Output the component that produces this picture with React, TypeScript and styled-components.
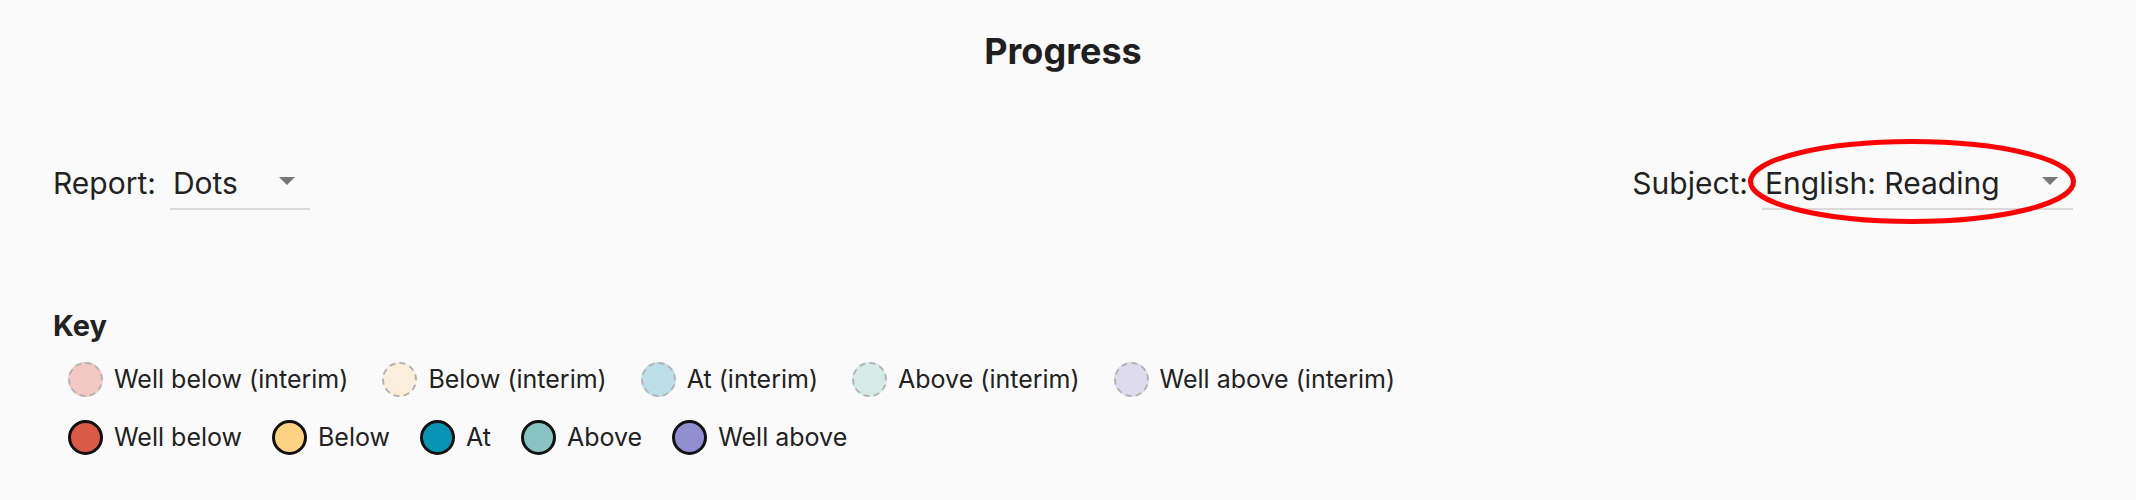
import React, { FC } from "react";
import styled, { createGlobalStyle } from "styled-components";

type Level = "wellBelow" | "below" | "at" | "above" | "wellAbove";

const colours: Record<Level, { solid: string; interim: string }> = {
  wellBelow: { solid: "#d95a45", interim: "#f2c8c4" },
  below: { solid: "#fed283", interim: "#faefdb" },
  at: { solid: "#0894b5", interim: "#bcdfe7" },
  above: { solid: "#86c3c1", interim: "#d6eae8" },
  wellAbove: { solid: "#918fcf", interim: "#dddbec" },
};

const interimKey: { level: Level; label: string }[] = [
  { level: "wellBelow", label: "Well below (interim)" },
  { level: "below", label: "Below (interim)" },
  { level: "at", label: "At (interim)" },
  { level: "above", label: "Above (interim)" },
  { level: "wellAbove", label: "Well above (interim)" },
];

const finalKey: { level: Level; label: string }[] = [
  { level: "wellBelow", label: "Well below" },
  { level: "below", label: "Below" },
  { level: "at", label: "At" },
  { level: "above", label: "Above" },
  { level: "wellAbove", label: "Well above" },
];

const App: FC = () => {
  return (
    <>
      <GlobalStyle />
      <Page>
        <Title>Progress</Title>
        <FilterBar>
          <Filter>
            <Label>Report:</Label>
            <Select $width={140}>
              <span>Dots</span>
              <Caret />
            </Select>
          </Filter>
          <Filter>
            <Label>Subject:</Label>
            <Select $width={311}>
              <span>English: Reading</span>
              <Caret />
              {/* hand-drawn highlight over the subject picker */}
              <Highlight width="340" height="98" viewBox="0 0 340 98">
                <ellipse
                  cx="170"
                  cy="46.5"
                  rx="161.5"
                  ry="40"
                  fill="none"
                  stroke="#ff0000"
                  strokeWidth="5"
                />
              </Highlight>
            </Select>
          </Filter>
        </FilterBar>
        <KeySection>
          <KeyTitle>Key</KeyTitle>
          <KeyRow $gap={34}>
            {interimKey.map((k) => (
              <KeyItem key={k.label}>
                <Dot $fill={colours[k.level].interim} $interim />
                <span>{k.label}</span>
              </KeyItem>
            ))}
          </KeyRow>
          <KeyRow $gap={30}>
            {finalKey.map((k) => (
              <KeyItem key={k.label}>
                <Dot $fill={colours[k.level].solid} />
                <span>{k.label}</span>
              </KeyItem>
            ))}
          </KeyRow>
        </KeySection>
      </Page>
    </>
  );
};

const GlobalStyle = createGlobalStyle`
  * {
    box-sizing: border-box;
  }

  body {
    margin: 0;
    background-color: #fafafa;
    color: #222;
    font-family: Inter, "Open Sans", sans-serif;
  }
`;

const Page = styled.div`
  width: 100%;
  height: 500px;
  padding: 31px 63px 0 53px;
  overflow: hidden;
`;

const Title = styled.h1`
  margin: 0;
  font-size: 36px;
  line-height: 40px;
  font-weight: 700;
  text-align: center;
  color: #1f1f1f;
`;

const FilterBar = styled.div`
  display: flex;
  justify-content: space-between;
  margin-top: 94px;
`;

const Filter = styled.div`
  display: flex;
  align-items: flex-start;
  gap: 14px;
  font-size: 30px;
  line-height: 36px;
`;

const Label = styled.span`
  color: #222;
`;

const Select = styled.div<{ $width: number }>`
  position: relative;
  display: flex;
  justify-content: space-between;
  width: ${(p) => p.$width}px;
  padding: 0 15px 7px 3px;
  border-bottom: 2px solid #d9d9d9;
  cursor: pointer;
`;

const Caret = styled.span`
  width: 0;
  height: 0;
  margin-top: 12px;
  border-left: 8px solid transparent;
  border-right: 8px solid transparent;
  border-top: 8px solid #777;
`;

const Highlight = styled.svg`
  position: absolute;
  left: -20px;
  top: -30px;
  pointer-events: none;
`;

const KeySection = styled.section`
  margin-top: 99px;
`;

const KeyTitle = styled.h2`
  margin: 0 0 19px;
  font-size: 29px;
  line-height: 34px;
  font-weight: 700;
`;

const KeyRow = styled.div<{ $gap: number }>`
  display: flex;
  align-items: center;
  gap: ${(p) => p.$gap}px;
  padding-left: 15px;
  font-size: 25px;
  line-height: 35px;

  & + & {
    margin-top: 23px;
  }
`;

const KeyItem = styled.div`
  display: flex;
  align-items: center;
  gap: 11px;
`;

const Dot = styled.span<{ $fill: string; $interim?: boolean }>`
  width: 35px;
  height: 35px;
  border-radius: 50%;
  background-color: ${(p) => p.$fill};
  border: ${(p) => (p.$interim ? "2px dashed #b3b3b3" : "3px solid #111")};
`;

export default App;
